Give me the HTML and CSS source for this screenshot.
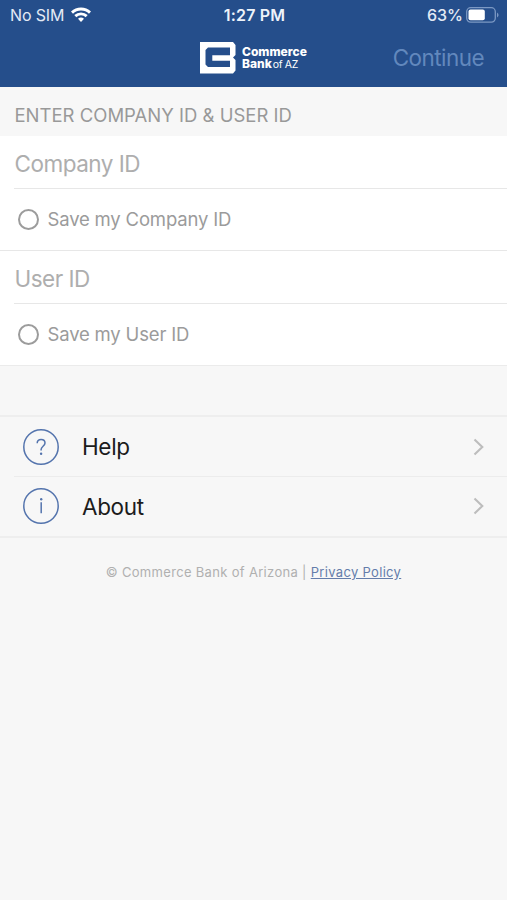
FILE: index.html
```html
<!DOCTYPE html>
<html lang="en">
<head>
<meta charset="utf-8">
<title>Commerce Bank of AZ</title>
<link rel="stylesheet" href="styles.css">
</head>
<body>
<header class="top">
  <div class="status">
    <div class="carrier"><span class="carrier-name">No SIM</span>
      <svg class="wifi" width="20" height="15" viewBox="0 0 20 15"><g fill="none" stroke="#fff" stroke-width="2.9"><path d="M1 5.6A13 13 0 0 1 19 5.6"/><path d="M4.3 9.1A8.3 8.3 0 0 1 15.7 9.1"/></g><path fill="#fff" d="M7 11.8a4.4 4.4 0 0 1 6 0L10 15z"/></svg>
    </div>
    <span class="time">1:27 PM</span>
    <div class="power"><span class="percent">63%</span>
      <svg width="33" height="16" viewBox="0 0 33 16"><rect x=".7" y=".7" width="28.6" height="14.4" rx="4" fill="none" stroke="#7c99c4" stroke-width="1.3"/><rect x="2.5" y="2.5" width="16.3" height="10.8" rx="2" fill="#fff"/><path d="M31 5.4q3.2 2.5 0 5z" fill="#7c99c4"/></svg>
    </div>
  </div>
  <nav class="nav">
    <div class="brand">
      <svg width="36" height="32" viewBox="0 0 36 32"><path fill="#fff" d="M0 0H33L35.5 3V13L33 15.5L35.5 18V28.5L33 31.5H0Z"/><path fill="#254e8b" d="M8 5.5H30V13.3H12.3V18.7H30V25H8L5.5 22.5V8Z"/></svg>
      <div class="brand-name"><span>Commerce</span><span>Bank<i>of AZ</i></span></div>
    </div>
    <span class="continue">Continue</span>
  </nav>
</header>
<main>
  <h1 class="title"><span>ENTER COMPANY ID &amp; USER ID</span></h1>
  <section class="form">
    <div class="field"><span class="company">Company ID</span></div>
    <div class="save"><b class="radio"></b><span class="save-company">Save my Company ID</span></div>
    <div class="field"><span class="user">User ID</span></div>
    <div class="save"><b class="radio"></b><span class="save-user">Save my User ID</span></div>
  </section>
  <section class="links">
    <div class="link">
      <svg class="icon" width="38" height="38" viewBox="0 0 38 38" fill="none" stroke="#5474ad" stroke-width="1.5"><circle cx="19" cy="19" r="17.2"/><path d="M15.2 15.2c0-2.5 1.5-3.8 3.9-3.8s3.9 1.4 3.9 3.6c0 3.2-3.9 3.4-3.9 6.6v.9"/><circle cx="19.1" cy="25.8" r="1.2" fill="#5474ad" stroke="none"/></svg>
      <span class="help">Help</span>
      <svg class="chev" width="12" height="18" viewBox="0 0 12 18"><path d="M1.5 1.5L9.3 9L1.5 16.5" fill="none" stroke="#bdbdbd" stroke-width="2.1"/></svg>
    </div>
    <div class="link">
      <svg class="icon" width="38" height="38" viewBox="0 0 38 38" fill="none" stroke="#5474ad" stroke-width="1.5"><circle cx="19" cy="19" r="17.2"/><path d="M19.2 15.2V26.2"/><circle cx="19.2" cy="12.2" r="1.2" fill="#5474ad" stroke="none"/></svg>
      <span class="about">About</span>
      <svg class="chev" width="12" height="18" viewBox="0 0 12 18"><path d="M1.5 1.5L9.3 9L1.5 16.5" fill="none" stroke="#bdbdbd" stroke-width="2.1"/></svg>
    </div>
  </section>
  <footer class="legal"><span>© Commerce Bank of Arizona | <a>Privacy Policy</a></span></footer>
</main>
</body>
</html>
```
FILE: styles.css
```css
* { box-sizing: border-box; }
body { margin: 0; height: 900px; background: #f7f7f7; font-family: Inter, "Liberation Sans", sans-serif; white-space: nowrap; overflow: hidden; }
svg { display: block; flex: none; }
.top { height: 87px; background: #254e8b; color: #fff; }
.status { height: 29px; display: grid; grid-template-columns: 1fr auto 1fr; align-items: center; padding: 0 8px 0 10px; font-size: 16px; }
.carrier, .power { display: flex; align-items: center; gap: 7px; }
.carrier-name { color: #e3eaf5; letter-spacing: -0.15px; }
.power { justify-content: flex-end; gap: 3px; }
.time { font-weight: 600; color: #eef3fa; letter-spacing: 0.2px; }
.percent { font-weight: 500; color: #e3eaf5; letter-spacing: 0; }
.nav { height: 58px; display: grid; grid-template-columns: 200px 1fr auto; align-items: center; padding-right: 23px; }
.brand { grid-column: 2; display: flex; align-items: center; gap: 6px; }
.brand-name { display: flex; flex-direction: column; font-size: 12px; font-weight: 800; line-height: 12.5px; letter-spacing: 0; }
.brand-name i { font-style: normal; font-weight: 400; font-size: 10.5px; line-height: 10px; margin-left: 1px; letter-spacing: -0.35px; }
.continue { color: #6288bd; font-size: 22.5px; letter-spacing: -0.55px; padding-bottom: 2px; }
.title { margin: 0; height: 49px; padding: 6px 14px 0 14.5px; display: flex; align-items: center; font-size: 18.5px; font-weight: 400; color: #999; }
.form { background: #fff; border-bottom: 1px solid #ebebeb; }
.field { height: 53px; margin-left: 14px; border-bottom: 1px solid #e7e7e7; display: flex; align-items: center; padding: 3px 0 0 0.5px; font-size: 22.5px; color: #aeaeae; }
.company, .user { letter-spacing: -0.5px; }
.save { height: 62px; display: flex; align-items: center; padding-left: 18px; gap: 9px; font-size: 18.5px; letter-spacing: -0.18px; color: #9b9b9b; }
.save span { padding-bottom: 1px; margin-left: -0.5px; }
.save:last-child { height: 61px; }
.save:not(:last-child) { border-bottom: 1px solid #e7e7e7; }
.radio { width: 21px; height: 21px; border: 2px solid #9c9c9c; border-radius: 50%; }
.links { margin-top: 49px; border-top: 2px solid #eee; border-bottom: 2px solid #eee; }
.link { height: 60px; display: flex; align-items: center; padding: 0 22px 1px; font-size: 22.5px; letter-spacing: -0.35px; color: #1c1c1c; }
.link:first-child { height: 59px; padding-bottom: 0; }
.link + .link { margin-left: 14px; padding-left: 8px; border-top: 1px solid #ececec; }
.icon { margin-right: 22px; }
.chev { margin-left: auto; }
.legal { display: flex; justify-content: center; padding-top: 25px; font-size: 13px; line-height: 18px; letter-spacing: 0.32px; color: #b0b0b0; }
.legal a { color: #647dab; text-decoration: underline; }
```
